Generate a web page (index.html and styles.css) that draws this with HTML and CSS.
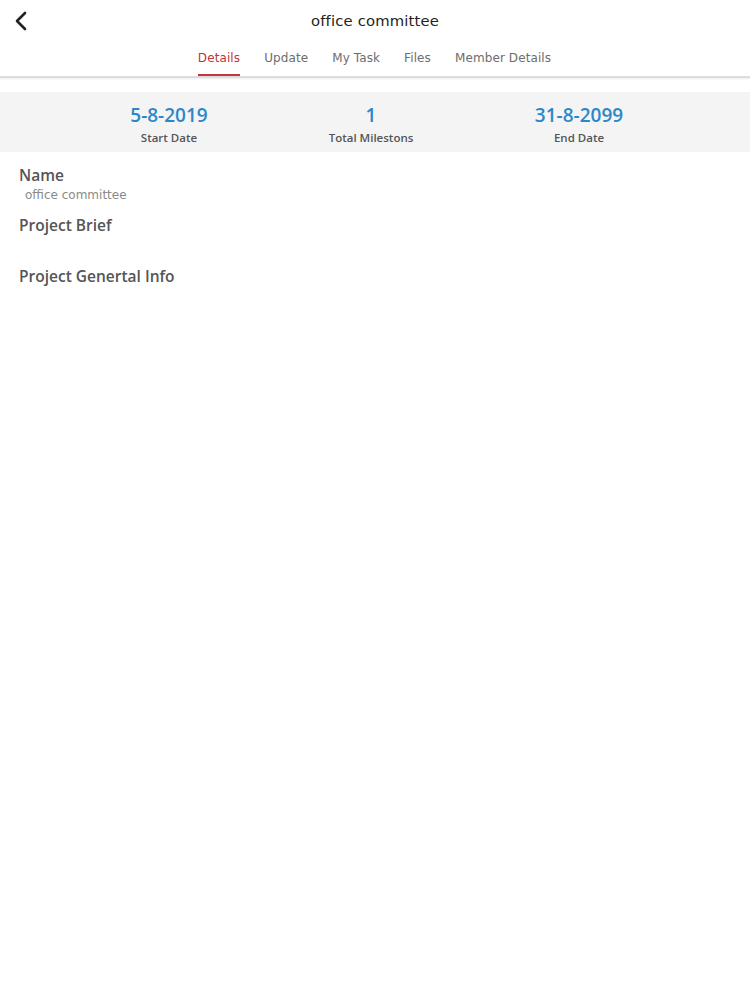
FILE: index.html
```html
<!DOCTYPE html>
<html>
<head>
<meta charset="utf-8">
<link rel="stylesheet" href="styles.css">
</head>
<body>
<header class="topbar">
  <div class="titlebar">
    <button class="back" aria-label="Back">
      <svg width="14" height="20" viewBox="0 0 14 20"><path d="M11 2 L3 10 L11 18" fill="none" stroke="#222" stroke-width="2.6" stroke-linecap="round" stroke-linejoin="round"/></svg>
    </button>
    <h1 class="title">office committee</h1>
  </div>
  <nav class="tabs">
    <a class="tab active">Details</a>
    <a class="tab">Update</a>
    <a class="tab">My Task</a>
    <a class="tab">Files</a>
    <a class="tab">Member Details</a>
  </nav>
</header>
<section class="stats">
  <div class="stat"><div class="value">5-8-2019</div><div class="label">Start Date</div></div>
  <div class="stat"><div class="value">1</div><div class="label">Total Milestons</div></div>
  <div class="stat"><div class="value">31-8-2099</div><div class="label">End Date</div></div>
</section>
<main class="details">
  <div class="field">
    <div class="field-title">Name</div>
    <div class="field-value">office committee</div>
  </div>
  <div class="field brief">
    <div class="field-title">Project Brief</div>
  </div>
  <div class="field">
    <div class="field-title">Project Genertal Info</div>
  </div>
</main>
</body>
</html>
```
FILE: styles.css
```css
html, body {
  margin: 0;
  padding: 0;
  background: #ffffff;
  font-family: "DejaVu Sans", "Open Sans", sans-serif;
}
.topbar {
  border-bottom: 2px solid #dcdcdc;
  box-shadow: 0 1px 2px rgba(0,0,0,0.08);
}
.titlebar {
  position: relative;
  height: 40px;
  display: flex;
  align-items: center;
  justify-content: center;
}
.back {
  position: absolute;
  left: 13px;
  top: 11px;
  border: 0;
  background: none;
  padding: 0;
  width: 16px;
  height: 20px;
}
.title {
  margin: 0;
  font-size: 14.8px;
  font-weight: 400;
  color: #222;
  letter-spacing: 0.15px;
}
.tabs {
  display: flex;
  justify-content: center;
  gap: 24px;
  height: 36px;
  padding-right: 1px;
}
.tab {
  display: flex;
  align-items: center;
  font-size: 12px;
  letter-spacing: 0.1px;
  color: #6d6d6d;
  padding-top: 2px;
  border-bottom: 2px solid transparent;
}
.tab.active {
  color: #c0353a;
  border-bottom-color: #c0353a;
}
.stats {
  margin-top: 14px;
  background: #f4f4f5;
  height: 60px;
  display: grid;
  grid-template-columns: 204px 200px 216px;
  padding-left: 67px;
}
.stat {
  display: flex;
  flex-direction: column;
  align-items: center;
  padding-top: 10px;
}
.value {
  font-family: "Open Sans", sans-serif;
  font-size: 19px;
  font-weight: 600;
  color: #2b88c8;
  line-height: 26px;
}
.label {
  font-family: "Open Sans", sans-serif;
  font-size: 11.5px;
  font-weight: 600;
  color: #555;
  line-height: 16px;
  margin-top: 2px;
}
.details {
  padding: 12px 19px;
}
.field-title {
  font-family: "Open Sans", sans-serif;
  font-size: 15.5px;
  font-weight: 600;
  color: #555;
  line-height: 22px;
}
.field-value {
  font-size: 12px;
  color: #8a8a8a;
  padding-left: 6px;
  padding-top: 2px;
  line-height: 15px;
  margin-bottom: 11px;
}
.brief {
  margin-bottom: 29px;
}
```
